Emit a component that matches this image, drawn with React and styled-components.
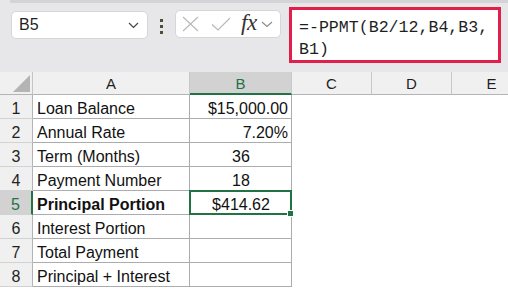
import React from 'react';
import styled, { createGlobalStyle } from 'styled-components';

const GlobalStyle = createGlobalStyle`
  body {
    margin: 0;
    background: #fff;
    overflow: hidden;
  }
`;

const rows = [
  { n: 1, a: 'Loan Balance', b: '$15,000.00', align: 'right' },
  { n: 2, a: 'Annual Rate', b: '7.20%', align: 'right' },
  { n: 3, a: 'Term (Months)', b: '36', align: 'center' },
  { n: 4, a: 'Payment Number', b: '18', align: 'center' },
  { n: 5, a: 'Principal Portion', b: '$414.62', align: 'center', bold: true, selected: true },
  { n: 6, a: 'Interest Portion', b: '' },
  { n: 7, a: 'Total Payment', b: '' },
  { n: 8, a: 'Principal + Interest', b: '' },
];

const columns = ['A', 'B', 'C', 'D', 'E'];

const App = () => {
  return (
    <Page>
      <GlobalStyle />
      <Toolbar>
        <NameBox>
          <span>B5</span>
          <svg width="11" height="7" viewBox="0 0 11 7">
            <path d="M1 1 L5.5 5.5 L10 1" fill="none" stroke="#444" strokeWidth="1.2" />
          </svg>
        </NameBox>
        <Dots>
          <i />
          <i />
          <i />
        </Dots>
        <FuncBox>
          <svg width="17" height="16" viewBox="0 0 17 16">
            <path d="M1 1 L16 15 M16 1 L1 15" stroke="#b9b9b9" strokeWidth="1.2" fill="none" />
          </svg>
          <svg width="20" height="14" viewBox="0 0 20 14">
            <path d="M1 7.5 L7 13 L19 1" stroke="#b9b9b9" strokeWidth="1.2" fill="none" />
          </svg>
          <Fx>fx</Fx>
          <svg width="12" height="7" viewBox="0 0 12 7">
            <path d="M1 1 L6 5.5 L11 1" fill="none" stroke="#8a8a8a" strokeWidth="1.1" />
          </svg>
        </FuncBox>
        <FormulaBox>
          =-PPMT(B2/12,B4,B3,
          <br />
          B1)
        </FormulaBox>
      </Toolbar>
      <Sheet>
        <Corner>
          <svg width="17" height="17" viewBox="0 0 17 17">
            <path d="M17 0 L17 17 L0 17 Z" fill="#b4b4b4" />
          </svg>
        </Corner>
        {columns.map((c) => (
          <ColHeader key={c} $active={c === 'B'}>
            {c}
          </ColHeader>
        ))}
        {rows.map((r) => (
          <React.Fragment key={r.n}>
            <RowHeader $active={r.selected}>{r.n}</RowHeader>
            <Cell $bold={r.bold}>{r.a}</Cell>
            <Cell $align={r.align} $selected={r.selected}>
              {r.b}
            </Cell>
            <Empty />
            <Empty />
            <Empty />
          </React.Fragment>
        ))}
      </Sheet>
    </Page>
  );
};

const Page = styled.div`
  width: 508px;
  height: 289px;
  overflow: hidden;
  font-family: 'Liberation Sans', Arial, sans-serif;
`;

const Toolbar = styled.div`
  height: 72px;
  box-sizing: border-box;
  display: flex;
  align-items: flex-start;
  padding: 7px 0 0 11px;
  background: linear-gradient(#d4d4d7, #d4d4d7) 10px 0 / 100% 3px no-repeat, #e7e7ea;
`;

const NameBox = styled.div`
  margin-top: 4px;
  width: 137px;
  height: 28px;
  box-sizing: border-box;
  display: flex;
  align-items: center;
  justify-content: space-between;
  padding: 0 8px 0 7px;
  background: #fff;
  border: 1px solid #d6d6d8;
  border-radius: 5px;
  font-size: 16px;
  color: #1f1f1f;
`;

const Dots = styled.div`
  margin: 12px 12px 0 12px;
  display: flex;
  flex-direction: column;
  gap: 3px;

  i {
    display: block;
    width: 3px;
    height: 3px;
    background: #4b5134;
  }
`;

const FuncBox = styled.div`
  margin-top: 3px;
  width: 106px;
  height: 28px;
  box-sizing: border-box;
  display: flex;
  align-items: center;
  padding: 0 3px 0 6px;
  background: #fff;
  border: 1px solid #d6d6d8;
  border-radius: 5px;

  svg:nth-child(1) {
    margin-right: 12px;
  }
  svg:nth-child(2) {
    margin-right: 10px;
  }
`;

const Fx = styled.span`
  font-family: 'Liberation Serif', 'Times New Roman', serif;
  font-style: italic;
  font-size: 23px;
  color: #333;
  margin-right: 4px;
  margin-top: -3px;
  letter-spacing: -0.5px;
`;

const FormulaBox = styled.div`
  margin-left: 8px;
  width: 212px;
  height: 56px;
  box-sizing: border-box;
  border: 3px solid #e11f4b;
  background: #fff;
  padding: 7px 0 0 7px;
  font-family: 'Liberation Mono', 'Courier New', monospace;
  font-size: 16.6px;
  line-height: 22px;
  color: #1f1f1f;
  white-space: nowrap;
`;

const Sheet = styled.div`
  display: grid;
  grid-template-columns: 33px 157px 102px 80px 80px 80px;
  grid-template-rows: 23px;
  grid-auto-rows: 24px;
`;

const Corner = styled.div`
  background: #f0f0f0;
  border-right: 1px solid #c4c4c4;
  border-bottom: 1px solid #b4b4b4;
  display: flex;
  align-items: flex-end;
  justify-content: flex-end;
  padding: 0 2px 2px 0;
`;

const ColHeader = styled.div`
  background: ${(p) => (p.$active ? '#d2d2d2' : '#f0f0f0')};
  color: ${(p) => (p.$active ? '#217346' : '#1f1f1f')};
  border-right: 1px solid #c8c8c8;
  border-bottom: ${(p) => (p.$active ? '2px solid #217346' : '1px solid #b4b4b4')};
  font-size: 15px;
  display: flex;
  align-items: center;
  justify-content: center;
  padding-top: 1px;
`;

const RowHeader = styled.div`
  background: ${(p) => (p.$active ? '#d2d2d2' : '#f0f0f0')};
  color: ${(p) => (p.$active ? '#217346' : '#1f1f1f')};
  border-right: ${(p) => (p.$active ? '2px solid #217346' : '1px solid #b4b4b4')};
  border-bottom: 1px solid #d2d2d2;
  font-size: 16px;
  line-height: 18px;
  display: flex;
  align-items: flex-end;
  justify-content: center;
`;

const Cell = styled.div`
  position: relative;
  border-right: 1px solid #acacac;
  border-bottom: 1px solid #acacac;
  font-size: 16px;
  line-height: 18px;
  font-weight: ${(p) => (p.$bold ? 700 : 400)};
  color: #111;
  display: flex;
  align-items: flex-end;
  justify-content: ${(p) =>
    p.$align === 'right' ? 'flex-end' : p.$align === 'center' ? 'center' : 'flex-start'};
  padding: 0 3px 0 4px;
  white-space: nowrap;

  ${(p) =>
    p.$selected &&
    `
    &::after {
      content: '';
      position: absolute;
      inset: -1px;
      border: 2px solid #217346;
    }
    &::before {
      content: '';
      position: absolute;
      right: -3px;
      bottom: -3px;
      width: 5px;
      height: 5px;
      background: #217346;
      border: 1px solid #fff;
      z-index: 1;
    }
  `}
`;

const Empty = styled.div`
  background: #fff;
`;

export default App;
